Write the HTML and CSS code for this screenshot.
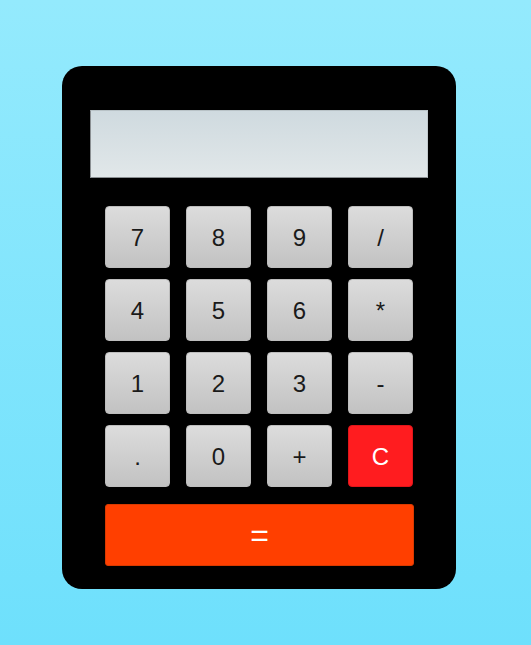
FILE: index.html
```html
<!DOCTYPE html>
<html>
<head>
<meta charset="utf-8">
<link rel="stylesheet" href="styles.css">
</head>
<body>
<div class="calc">
  <div class="display"></div>
  <div class="keys">
    <button class="key">7</button>
    <button class="key">8</button>
    <button class="key">9</button>
    <button class="key">/</button>
    <button class="key">4</button>
    <button class="key">5</button>
    <button class="key">6</button>
    <button class="key">*</button>
    <button class="key">1</button>
    <button class="key">2</button>
    <button class="key">3</button>
    <button class="key">-</button>
    <button class="key">.</button>
    <button class="key">0</button>
    <button class="key">+</button>
    <button class="key clear">C</button>
  </div>
  <button class="equals">=</button>
</div>
</body>
</html>
```
FILE: styles.css
```css
html, body {
  margin: 0;
  height: 100%;
}
body {
  background: linear-gradient(to bottom, #94eafd 0%, #6ee0fc 100%);
  font-family: "Liberation Sans", Arial, sans-serif;
  padding-top: 66px;
  box-sizing: border-box;
}
.calc {
  margin-left: 62px;
  width: 394px;
  height: 523px;
  background: #000;
  border-radius: 20px;
  box-sizing: border-box;
  padding: 44px 28px 0 28px;
  display: flex;
  flex-direction: column;
}
.display {
  height: 68px;
  box-sizing: border-box;
  border: 1px solid #8a8f92;
  border-top-color: #b8c2c6;
  border-right-color: #c0c8cc;
  background: linear-gradient(to bottom, #cfdadf 0%, #e1e7e9 100%);
}
.keys {
  margin: 28px 0 0 15px;
  display: grid;
  grid-template-columns: repeat(4, 65px);
  grid-auto-rows: 62px;
  column-gap: 16px;
  row-gap: 11px;
}
.key {
  margin: 0;
  padding: 2px 0 0 0;
  border: 1px solid #bdbdbd;
  border-radius: 4px;
  background: linear-gradient(to bottom, #dcdcdc 0%, #c2c2c2 100%);
  font-family: "Liberation Sans", Arial, sans-serif;
  font-size: 24px;
  color: #1a1a1a;
}
.key.clear {
  background: #ff1c1f;
  border-color: #e0151a;
  color: #fff;
}
.equals {
  margin: 17px 0 0 15px;
  width: 309px;
  height: 62px;
  padding: 0;
  border: 1px solid #d93a00;
  border-radius: 3px;
  background: #ff3f00;
  color: #fff;
  font-family: "Liberation Sans", Arial, sans-serif;
  font-size: 32px;
}
```
